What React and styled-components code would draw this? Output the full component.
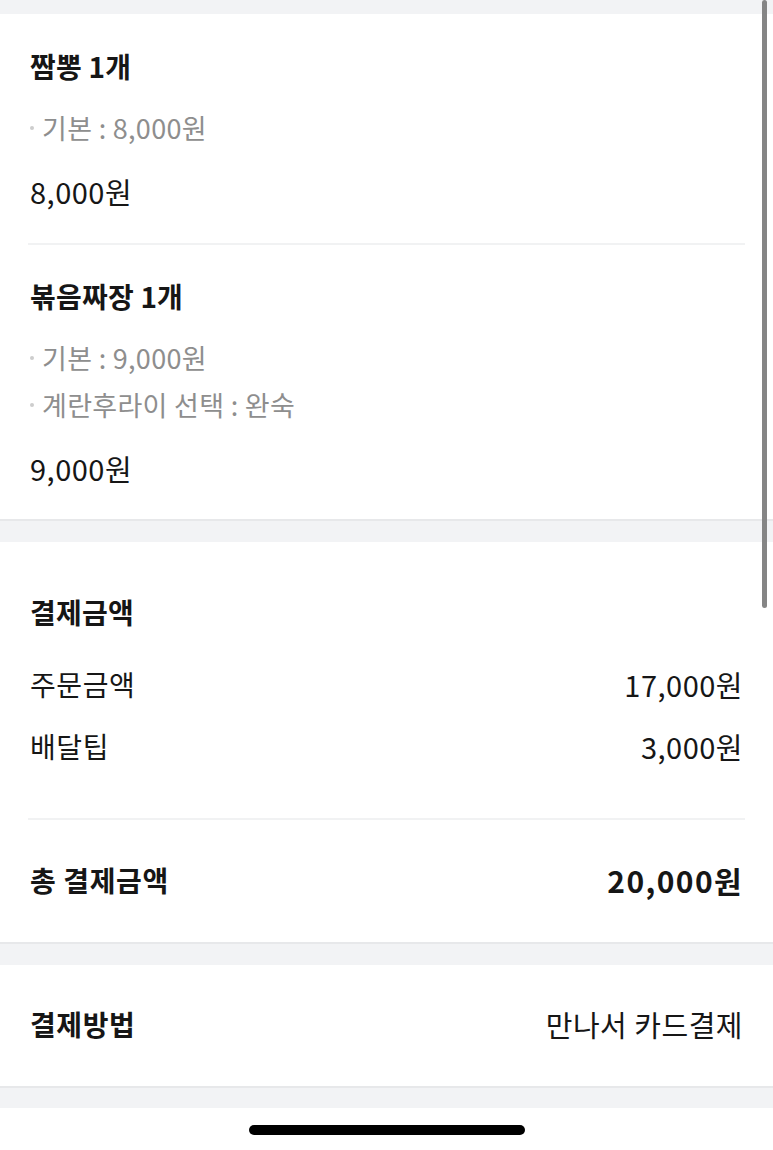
import React from 'react';
import styled, { createGlobalStyle } from 'styled-components';

const GlobalStyle = createGlobalStyle`
  html, body {
    margin: 0;
    padding: 0;
    background: #ffffff;
  }
  body {
    font-family: 'Noto Sans CJK KR', 'Noto Sans', sans-serif;
    color: #161616;
  }
`;

const Screen = styled('div')`
  position: relative;
  width: 773px;
  height: 1150px;
  overflow: hidden;
  background: #ffffff;
`;

const Band = styled('div')`
  height: ${props => props.h}px;
  background: #f2f3f5;
`;

const Section = styled('div')`
  background: #ffffff;
  padding: ${props => props.pad};
  border-bottom: 2px solid #e7e8ea;
`;

const Item = styled('div')`
  margin: 0 28px;
  padding: ${props => props.pad};
  border-bottom: ${props => (props.last ? 'none' : '2px solid #f1f2f3')};
`;

const Title = styled('div')`
  font-size: 28px;
  line-height: 36px;
  font-weight: 700;
  padding-left: 2px;
  letter-spacing: 0.2px;
`;

const Options = styled('div')`
  display: flex;
  flex-direction: column;
  gap: 11px;
  margin-top: 26px;
`;

const Option = styled('div')`
  display: flex;
  align-items: center;
  font-size: 27px;
  line-height: 36px;
  color: #8e8e8e;
  padding-left: 2px;
  letter-spacing: 0.3px;

  &::before {
    content: '';
    width: 4px;
    height: 4px;
    border-radius: 50%;
    background: #cdcdcd;
    margin-right: 8px;
  }
`;

const Price = styled('div')`
  margin-top: 27px;
  font-size: 29px;
  line-height: 36px;
  padding-left: 2px;
  letter-spacing: 0.5px;
`;

const Inner = styled('div')`
  padding: 0 30px;
`;

const Heading = styled('div')`
  font-size: 28px;
  line-height: 36px;
  font-weight: 700;
  letter-spacing: 0.2px;
`;

const Row = styled('div')`
  display: flex;
  justify-content: space-between;
  align-items: center;
  margin-top: ${props => props.mt || 0}px;
  font-size: 28px;
  line-height: 36px;
  font-weight: ${props => (props.bold ? 700 : 400)};
`;

const Label = styled('span')`
  letter-spacing: 0.6px;
`;

const Value = styled('span')`
  font-size: ${props => (props.bold ? 30 : 29)}px;
  font-weight: ${props => (props.bold ? 700 : 400)};
  letter-spacing: ${props => (props.bold ? '1.4px' : '0.5px')};
`;

const Divider = styled('div')`
  height: 2px;
  background: #f1f2f3;
  margin: ${props => props.mt}px 28px 0;
`;

const Scrollbar = styled('div')`
  position: absolute;
  top: 0;
  right: 6px;
  width: 5px;
  height: 608px;
  border-radius: 3px;
  background: #858585;
`;

const HomeArea = styled('div')`
  display: flex;
  justify-content: center;
  padding-top: 17px;
`;

const HomeIndicator = styled('div')`
  width: 276px;
  height: 10px;
  border-radius: 5px;
  background: #000000;
`;

const items = [
  { title: '짬뽕 1개', options: ['기본 : 8,000원'], price: '8,000원' },
  {
    title: '볶음짜장 1개',
    options: ['기본 : 9,000원', '계란후라이 선택 : 완숙'],
    price: '9,000원'
  }
];

export default function App() {
  return (
    <Screen>
      <GlobalStyle />
      <Band h={14} />
      <Section pad="0">
        {items.map((item, i) => (
          <Item
            key={item.title}
            last={i === items.length - 1}
            pad={i === 0 ? '34px 0 34px' : '33px 0 33px'}
          >
            <Title>{item.title}</Title>
            <Options>
              {item.options.map(opt => (
                <Option key={opt}>{opt}</Option>
              ))}
            </Options>
            <Price>{item.price}</Price>
          </Item>
        ))}
      </Section>
      <Band h={21} />
      <Section pad="52px 0 44px">
        <Inner>
          <Heading>결제금액</Heading>
          <Row mt={36}>
            <Label>주문금액</Label>
            <Value>17,000원</Value>
          </Row>
          <Row mt={26}>
            <Label>배달팁</Label>
            <Value>3,000원</Value>
          </Row>
        </Inner>
        <Divider mt={54} />
        <Inner>
          <Row bold mt={42}>
            <Label>총 결제금액</Label>
            <Value bold>20,000원</Value>
          </Row>
        </Inner>
      </Section>
      <Band h={21} />
      <Section pad="41px 0 44px">
        <Inner>
          <Row bold>
            <Label>결제방법</Label>
            <Value>만나서 카드결제</Value>
          </Row>
        </Inner>
      </Section>
      <Band h={20} />
      <HomeArea>
        <HomeIndicator />
      </HomeArea>
      <Scrollbar />
    </Screen>
  );
}
